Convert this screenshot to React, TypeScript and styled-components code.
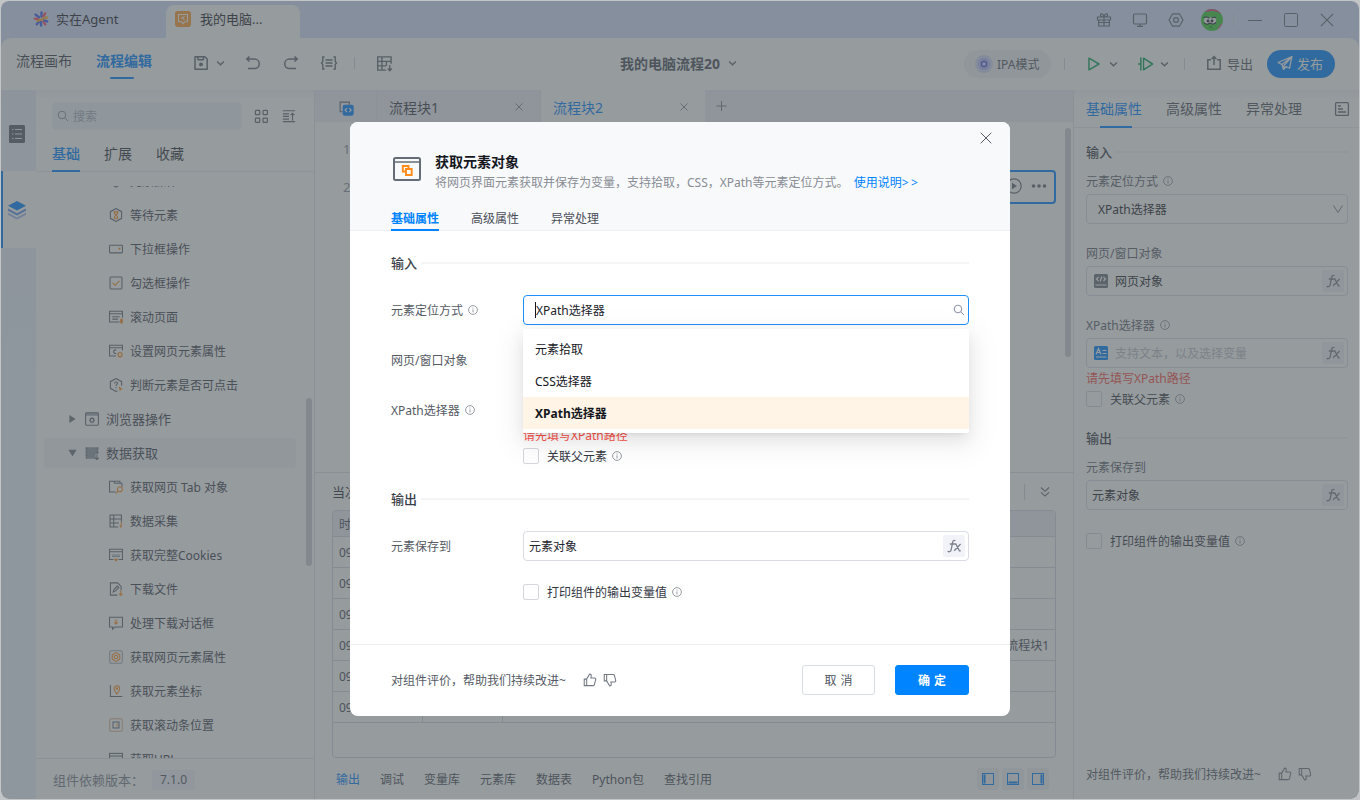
import React from 'react';
import styled, { createGlobalStyle, css } from 'styled-components';

const Global = createGlobalStyle`
  * { box-sizing: border-box; }
  body { margin: 0; background: #c3c4c5; overflow: hidden; }
  body, input, button { font-family: "Noto Sans", "Noto Sans CJK SC", sans-serif; font-size: 12px; color: #33363f; }
  svg { display: block; flex: none; }
`;

const BLUE = '#0084ff';
const ORANGE = '#ff8c1a';
const SLATE = '#646c76';

/* ---------- icons ---------- */

const Svg = ({ size = 16, color = SLATE, w = 1.2, box = 16, children }: {
  size?: number; color?: string; w?: number; box?: number; children: React.ReactNode;
}) => (
  <svg width={size} height={size} viewBox={`0 0 ${box} ${box}`} fill="none" stroke={color} strokeWidth={w}>
    {children}
  </svg>
);

const Chevron = ({ color = SLATE }: { color?: string }) => (
  <Svg size={9} box={8} color={color} w={1.2}><path d="M1 2.2 4 5.2 7 2.2" /></Svg>
);
const Cross = ({ size = 10, color = '#6b7078', w = 1 }: { size?: number; color?: string; w?: number }) => (
  <Svg size={size} box={10} color={color} w={w}><path d="M.6.6l8.8 8.8M9.4.6.6 9.4" /></Svg>
);
const Info = () => (
  <Svg size={10} box={10} color="#8b9099" w={0.9}>
    <circle cx="5" cy="5" r="4.4" />
    <path d="M5 4.4v3M5 2.5v1" />
  </Svg>
);
const ThumbUp = () => (
  <Svg size={14} color="#737983" w={1.2}>
    <path d="M1.4 7h2.8v7.4H1.4zM4.2 7 7.6 1.2c1.5 0 2 1 1.8 2.2L9 5.8h4.4c.9 0 1.3.7 1.1 1.5l-1.4 6c-.2.7-.7 1.1-1.4 1.1H4.2" />
  </Svg>
);
const ThumbDown = () => (
  <Svg size={14} color="#737983" w={1.2}>
    <path d="M1.4 9h2.8V1.6H1.4zM4.2 9l3.4 5.8c1.5 0 2-1 1.8-2.2L9 10.2h4.4c.9 0 1.3-.7 1.1-1.5l-1.4-6c-.2-.7-.7-1.1-1.4-1.1H4.2" />
  </Svg>
);
const Magnifier = ({ size = 12, color = '#8890a8' }: { size?: number; color?: string }) => (
  <Svg size={size} box={12} color={color} w={1}>
    <circle cx="5" cy="5" r="3.8" />
    <path d="M7.8 7.8 11 11" />
  </Svg>
);

const treeIcons: Record<string, React.ReactNode> = {
  hex: <path d="M8 1l6 3.5v7L8 15l-6-3.5v-7z" />,
  wait: <><path d="M8 .6l6.400 3.600v7.600L8 15.400l-6.400-3.600V4.200z" /><path stroke={ORANGE} d="M5.300 4.400h5.400M5.300 11.600h5.400M6.300 4.400v2L8 8l1.700-1.600v-2M6.300 11.600v-2L8 8l1.700 1.600v2" /></>,
  select: <><rect x=".6" y="3.800" width="14.800" height="8.600" rx="1" /><path stroke="none" fill={ORANGE} d="M10 6.600h4L12 9.200z" /></>,
  check: <><rect x="1.200" y="1.200" width="13.600" height="13.600" rx="1" /><path stroke={ORANGE} d="M4.200 7.800l2.800 2.800 5-5" /></>,
  scroll: <><path d="M12 13.800H.6V1.400h14.800v7.400M.6 4.200h14.800M3.800 7.600h8.400M3.800 10.400h6.400" /><rect x="12.800" y="9.800" width="3" height="5.800" rx="1.500" stroke="none" fill={ORANGE} /></>,
  setattr: <><path d="M8 13.800H.6V1.400h14.800v6M.6 4.200h14.800M8.400 7.200a2 2 0 1 0 0 3.200" /><circle cx="12.600" cy="12.200" r="2.200" stroke={ORANGE} /><path stroke={ORANGE} d="M12.600 8.800v1M12.600 14.600v1.200M9.200 12.200h1M15 12.200h1M10.200 9.800l.7.7M14.300 13.900l.7.7M15 9.800l-.7.7M10.900 13.900l-.7.7" /></>,
  judge: <><path d="M9.600 14.600 8 15.400l-6.400-3.600V4.200L8 .6l6.400 3.600v4.600M6.300 6.200c.2-2.400 3.600-2.200 3.400 0C9.600 7.400 8 7.400 8 9M8 10.400v1.200" /><path stroke="none" fill={ORANGE} d="M11 9.400l4.800 3.400-2.200.3-1.100 2.300z" /></>,
  browser: <><path stroke="none" fill="#aab0b9" d="M1 1h14v3.400H1z" /><rect x=".7" y=".9" width="14.600" height="14.200" rx="1" /><circle cx="8" cy="9.400" r="2.100" /><path d="M8 6v1.200M8 11.600v1.200M4.600 9.400h1.200M10.200 9.400h1.200M5.600 7l.8.8M9.600 11l.8.8M10.400 7l-.8.8M6.400 11l-.8.8" /></>,
  data: <><path stroke="none" fill="#949ba5" d="M1 1.500h14v8h-3v5H1z" /><path strokeDasharray="2.600 1.200" d="M1.400 1.800v12.400M14.600 1.800v7.600" /><path d="M13.600 10v5.600M11.400 13.400l2.200 2.200 2.200-2.200" /></>,
  tab: <><path d="M7.500 13.700H.6V1.400h4.900l1 2.400h8.300v4M6 1.400h6.500v2.200" /><circle cx="12.400" cy="10.600" r="2.800" stroke={ORANGE} /><path stroke={ORANGE} d="M10.400 12.600l-2.600 2.800" /></>,
  collect: <><path d="M10.500 14.800H1.200V1.200h13v8M1.200 5.600h13M1.200 10.200h10M5.400 1.200v13.600" /><path stroke={ORANGE} d="M14 9.400v5.800M12.200 13.400l1.800 1.800" /></>,
  cookie: <><path d="M5 13.200H.6V1.400h14.800v11.800H11M.6 4.200h14.800" /><path stroke="#98a0aa" d="M3 8h10M3.500 9.600h9" /><path stroke="none" fill={ORANGE} d="M5.400 12.400h5.200L8 15.800z" /></>,
  download: <><path d="M9.500 15H1.600V1h8.200l4 4v4.400M4.800 11.400l1-3 3.700-3.800L11.200 6.200 7.500 10.200z" /><path stroke={ORANGE} d="M13.400 9.800v5.400M11.400 13.200l2 2 2-2" /></>,
  dialog: <><path d="M.6 1.400h14.800v11.200H6.600l-2.600 2.400v-2.400H.6z" /><path stroke={ORANGE} d="M8 3.800v5.200M6 7.200l2 2 2-2" /></>,
  attr: <><rect x=".8" y=".8" width="14.400" height="14.400" rx="2" stroke="#a3a9b2" /><path stroke={ORANGE} d="M8 3l4.300 2.500v5L8 13l-4.300-2.500v-5z" /><circle cx="8" cy="8" r="2" stroke={ORANGE} /></>,
  coord: <><path d="M1.600 1.200v13h13.600" /><path stroke={ORANGE} d="M9 11.400C6.400 8.600 5.800 7.300 5.800 5.200a3.200 3.200 0 0 1 6.400 0c0 2.100-.6 3.400-3.200 6.200z" /><circle cx="9" cy="5.200" r=".8" stroke={ORANGE} /></>,
  scrollpos: <><rect x=".8" y=".8" width="14.400" height="14.400" rx="2" stroke="#ddb490" /><rect x="4.600" y="4.600" width="6.800" height="6.800" /><path stroke={ORANGE} d="M9.200 6.600v2.800" /></>,
  url: <><rect x=".6" y="1.600" width="14.800" height="12.400" /><path d="M.6 4.600h14.800" /></>,
};

const Glyph = ({ name }: { name: string }) => <Svg size={14} w={1.2}>{treeIcons[name]}</Svg>;

/* ---------- shell ---------- */

const Window = styled.div`
  position: relative;
  width: 1358px;
  height: 798px;
  margin: 1px;
  border-radius: 8px;
  overflow: hidden;
  display: flex;
  flex-direction: column;
  background: #d7e1ff;
`;
const Row = styled.div<{ $gap?: number }>`
  display: flex;
  align-items: center;
  gap: ${p => p.$gap || 0}px;
`;
const TitleBar = styled.header`
  height: 37px;
  flex: none;
  display: flex;
  align-items: stretch;
  padding-right: 13px;
`;
const HomeTab = styled.div`
  width: 165px;
  padding: 0 0 2px 32px;
  display: flex;
  align-items: center;
  gap: 7px;
  font-size: 13px;
  color: #22242b;
`;
const FileTab = styled.div`
  width: 134px;
  margin-top: 4px;
  padding: 0 0 6px 9px;
  display: flex;
  align-items: center;
  gap: 9px;
  border-radius: 8px 8px 0 0;
  background: #fff;
  font-size: 13px;
  color: #22242b;
`;
const FileBadge = styled.div`
  width: 16px;
  height: 16px;
  border-radius: 3px;
  background: #ff9d33;
  display: grid;
  place-items: center;
`;
const WindowTools = styled.div`
  margin-left: auto;
  display: flex;
  align-items: center;
`;
const Cell = styled.div<{ $w: number }>`
  width: ${p => p.$w}px;
  flex: none;
  display: flex;
  justify-content: center;
  align-items: center;
`;
const VLine = styled.i<{ $h?: number }>`
  flex: none;
  width: 1px;
  height: ${p => p.$h || 12}px;
  background: #d3d7de;
`;

const Toolbar = styled.div`
  height: 52px;
  flex: none;
  display: grid;
  grid-template-columns: 619px 1fr auto;
  align-items: center;
  padding: 0 24px 0 0;
  border-radius: 10px 10px 0 0;
  background: #fff;
`;
const ModeLink = styled.div<{ $on?: boolean }>`
  height: 36px;
  line-height: 30px;
  width: 56px;
  font-size: 14px;
  color: ${p => (p.$on ? BLUE : '#3c4049')};
  font-weight: ${p => (p.$on ? 700 : 400)};
  ${p => p.$on && css`
    &::after { content: ''; display: block; width: 24px; height: 2px; margin: 1px 0 0 14px; border-radius: 1px; background: ${BLUE}; }
  `}
`;
const FlowName = styled.div`
  display: flex;
  align-items: center;
  gap: 8px;
  padding-bottom: 2px;
  font-size: 14px;
  font-weight: 700;
  color: #4c525e;
`;
const ModePill = styled.div`
  width: 87px;
  height: 28px;
  margin-right: 13px;
  border-radius: 14px;
  background: #f2f3f8;
  display: flex;
  align-items: center;
  padding-left: 11px;
  gap: 4px;
  font-size: 12px;
  color: #535863;
`;
const ExportButton = styled.div`
  display: flex;
  align-items: center;
  gap: 5px;
  margin: 0 14px 0 21px;
  padding-bottom: 2px;
  font-size: 13px;
  color: #50555f;
`;
const PublishButton = styled.div`
  width: 68px;
  height: 28px;
  border-radius: 14px;
  background: ${BLUE};
  color: #fff;
  display: flex;
  align-items: center;
  padding: 0 0 2px 10px;
  gap: 4px;
  font-size: 13px;
`;
const Main = styled.div`
  flex: 1;
  min-height: 0;
  display: grid;
  grid-template-columns: 35px 279px 759px 1fr;
  background: #fff;
`;

/* ---------- left ---------- */

const Rail = styled.nav`
  background: linear-gradient(#ebeefa, #ebf3fe 40%);
  display: flex;
  flex-direction: column;
`;
const RailItem = styled.div<{ $on?: boolean }>`
  height: ${p => (p.$on ? 77 : 81)}px;
  padding: ${p => (p.$on ? '0 5px 0 0' : '7px 5px 0 0')};
  display: grid;
  place-items: center;
  background: ${p => (p.$on ? '#fff' : 'transparent')};
  border-left: 2px solid ${p => (p.$on ? BLUE : 'transparent')};
`;
const Side = styled.aside`
  display: flex;
  flex-direction: column;
  min-height: 0;
  border-right: 1px solid #e3e6ec;
  background: linear-gradient(#f4f5fb, #fff 10px);
`;
const SearchRow = styled.div`
  display: flex;
  align-items: center;
  padding: 12px 0 0 16px;
`;
const SearchBox = styled.div`
  width: 190px;
  height: 28px;
  border-radius: 4px;
  background: #edf3f9;
  display: flex;
  align-items: center;
  gap: 4px;
  padding-left: 5px;
  color: #a9aebb;
`;
const SideTabs = styled.div`
  display: flex;
  gap: 24px;
  height: 42px;
  padding-left: 16px;
  border-bottom: 1px solid #e8eaef;
`;
const SideTab = styled.div<{ $on?: boolean }>`
  height: 42px;
  line-height: 48px;
  font-size: 14px;
  font-weight: ${p => (p.$on ? 500 : 400)};
  color: ${p => (p.$on ? BLUE : '#30343d')};
  border-bottom: 2px solid ${p => (p.$on ? BLUE : 'transparent')};
`;
const TreeArea = styled.div`
  display: flex;
  height: 572px;
  margin-top: 14px;
  overflow: hidden;
`;
const Tree = styled.div`
  width: 270px;
  margin-top: -22px;
  padding-left: 8px;
`;
const TreeRow = styled.div<{ $group?: boolean; $on?: boolean }>`
  width: 252px;
  height: 30px;
  margin: 2px 0 4px;
  padding-left: ${p => (p.$group ? 24 : 65)}px;
  display: flex;
  align-items: center;
  gap: 7px;
  border-radius: 4px;
  background: ${p => (p.$on ? '#f4f5f9' : 'transparent')};
  font-size: ${p => (p.$group ? 13 : 12)}px;
  color: #3f4450;
  white-space: nowrap;
  span { margin-bottom: ${p => (p.$group ? 2 : 0)}px; }
`;
const Caret = styled.i<{ $open?: boolean }>`
  width: 9px;
  height: 8px;
  margin-right: 1px;
  background: #737a85;
  clip-path: ${p => (p.$open ? 'polygon(5% 10%, 95% 10%, 50% 95%)' : 'polygon(15% 0, 85% 50%, 15% 100%)')};
`;
const Thumb = styled.i<{ $h: number; $top: number }>`
  width: 6px;
  height: ${p => p.$h}px;
  margin-top: ${p => p.$top}px;
  border-radius: 3px;
  background: #cdd0d4;
`;
const Version = styled.div`
  flex: 1;
  display: flex;
  align-items: center;
  gap: 8px;
  padding: 0 0 0 17px;
  border-top: 1px solid #e3e6ec;
  font-size: 13px;
  color: #7c828c;
`;
const VersionTag = styled.span`
  width: 43px;
  height: 20px;
  line-height: 20px;
  border-radius: 3px;
  background: #f2f4fa;
  text-align: center;
  font-size: 12px;
  color: #565c67;
`;

/* ---------- center ---------- */

const Center = styled.section`
  display: flex;
  flex-direction: column;
  border-right: 1px solid #e3e6ec;
`;
const BlockTabs = styled.div`
  height: 32px;
  display: flex;
  background: linear-gradient(#eeeef9, #f1f1fa);
`;
const BlockTab = styled.div<{ $w: number; $on?: boolean }>`
  width: ${p => p.$w}px;
  display: flex;
  align-items: center;
  justify-content: space-between;
  padding: 2px 17px 0 12px;
  border-left: 1px solid #e6e8f1;
  background: ${p => (p.$on ? '#fff' : 'transparent')};
  font-size: 14px;
  color: ${p => (p.$on ? BLUE : '#3c4049')};
`;
const BlockIcon = styled.div`
  width: 61px;
  padding: 11px 0 0 24px;
`;
const Editor = styled.div`
  height: 350px;
  display: flex;
  justify-content: space-between;
  padding-right: 2px;
`;
const Lines = styled.div`
  width: 741px;
  padding-top: 10px;
`;
const Line = styled.div`
  display: flex;
  align-items: center;
  height: 34px;
  margin-bottom: 4px;
  padding-left: 28px;
  font-size: 13px;
  color: #8d929b;
`;
const Step = styled.div`
  flex: 1;
  height: 34px;
  margin-left: 14px;
  border: 2px solid ${BLUE};
  border-radius: 4px;
  display: flex;
  align-items: center;
  justify-content: flex-end;
  gap: 9px;
  padding: 0 7px 2px 0;
`;
const Console = styled.div`
  border-top: 1px solid #dfe2e9;
  padding: 0 17px;
  flex: 1;
`;
const ConsoleHead = styled.div`
  display: flex;
  align-items: center;
  justify-content: space-between;
  height: 37px;
  padding-right: 5px;
  font-size: 13px;
  color: #30343d;
`;
const LogTable = styled.div`
  width: 724px;
  height: 248px;
  border: 1px solid #d2d7e2;
  border-radius: 4px;
  overflow: hidden;
`;
const LogRow = styled.div<{ $head?: boolean }>`
  display: grid;
  grid-template-columns: 90px 80px 1fr;
  height: ${p => (p.$head ? 26 : 31)}px;
  line-height: ${p => (p.$head ? 27 : 31)}px;
  border-bottom: 1px solid #d2d7e2;
  background: ${p => (p.$head ? '#edf0f8' : 'transparent')};
  color: #474c57;
`;
const LogCell = styled.span<{ $end?: boolean }>`
  padding: 0 6px;
  border-right: ${p => (p.$end ? 0 : 1)}px solid #d2d7e2;
  text-align: ${p => (p.$end ? 'right' : 'left')};
`;
const ConsoleTabs = styled.div`
  display: flex;
  align-items: center;
  gap: 20px;
  height: 42px;
  padding: 0 7px 0 4px;
  color: #484d58;
`;
const ConsoleTab = styled.span<{ $on?: boolean }>`
  color: ${p => (p.$on ? BLUE : '#484d58')};
`;
const LayoutButton = styled.div`
  width: 22px;
  height: 22px;
  border-radius: 3px;
  background: #f1f2f6;
  display: grid;
  place-items: center;
`;

/* ---------- right ---------- */

const Props = styled.aside`
  display: flex;
  flex-direction: column;
  background: linear-gradient(#f4f5fb, #fff 10px);
`;
const PropTabs = styled.div`
  height: 38px;
  display: flex;
  gap: 24px;
  padding: 0 9px 0 12px;
  border-bottom: 1px solid #e8eaef;
  align-items: flex-start;
`;
const PropTab = styled.div<{ $on?: boolean }>`
  height: 38px;
  line-height: 37px;
  font-size: 14px;
  color: ${p => (p.$on ? BLUE : '#50555f')};
  ${p => p.$on && css`
    &::after { content: ''; display: block; width: 32px; height: 2px; margin: -1px 0 0 14px; background: ${BLUE}; }
  `}
`;
const PropBody = styled.div`
  flex: 1;
  padding: 14px 11px 0 12px;
`;
const SectionTitle = styled.div<{ $mt?: number }>`
  display: flex;
  align-items: center;
  gap: 4px;
  height: 20px;
  margin-top: ${p => p.$mt || 0}px;
  padding-bottom: 2px;
  font-size: 13px;
  font-weight: 500;
  color: #3a3e48;
  &::after { content: ''; flex: 1; height: 2px; margin-top: 2px; background: #f4f5f6; }
`;
const FieldLabel = styled.div<{ $mt: number }>`
  display: flex;
  align-items: center;
  gap: 5px;
  height: 18px;
  margin: ${p => p.$mt}px 0 4px;
  color: #60656f;
`;
const Input = styled.div<{ $focus?: boolean; $pad?: number; $muted?: boolean }>`
  height: 30px;
  display: flex;
  align-items: center;
  padding: 0 3px 0 ${p => p.$pad ?? 5}px;
  border: 1px solid ${p => (p.$focus ? '#1e8ef8' : '#d9dbe6')};
  border-radius: 4px;
  color: ${p => (p.$muted ? '#bcc0c8' : '#22242b')};
  > :last-child { margin-left: auto; }
`;
const Fx = styled.span`
  width: 22px;
  height: 22px;
  border-radius: 2px;
  background: #f1f3f8;
  display: grid;
  place-items: center;
`;
const FxIcon = () => (
  <Fx><Svg size={16} color="#7b808b" w={1.3}>
    <path d="M9.400 2.800C8 1.800 7 2.600 6.700 4.200L5.200 11.600C4.900 13.400 3.200 14.300 1.600 13.300M3.800 6h4.800M8.600 6h1.200l3.600 6.800h1.400M14.600 6 8.200 12.800" />
  </Svg></Fx>
);
const Warning = styled.div`
  height: 20px;
  line-height: 22px;
  color: #fb5147;
`;
const CheckRow = styled.div<{ $mt?: number }>`
  display: flex;
  align-items: center;
  height: 16px;
  margin-top: ${p => p.$mt || 0}px;
  color: #33363f;
  gap: 5px;
`;
const Box = styled.i`
  width: 16px;
  height: 16px;
  margin-right: 3px;
  border: 1px solid #d5d7dd;
  border-radius: 2px;
  background: #fff;
`;
const Rate = styled.div`
  display: flex;
  align-items: center;
  height: 20px;
  gap: 6px;
  color: #555a64;
  span { margin-right: 11px; }
`;

/* ---------- dialog ---------- */

const Mask = styled.div`
  position: absolute;
  inset: 0;
  background: rgba(80, 88, 93, 0.6);
`;
const Dialog = styled.div`
  position: absolute;
  left: 349px;
  top: 121px;
  width: 660px;
  height: 594px;
  border-radius: 8px;
  background: #fff;
  overflow: hidden;
  display: flex;
  flex-direction: column;
`;
const DialogHead = styled.div`
  height: 109px;
  background: #f8f9fb;
  border-bottom: 1px solid #eeeff2;
  padding: 0 18px 0 41px;
`;
const CloseRow = styled.div`
  height: 30px;
  display: flex;
  justify-content: flex-end;
  padding-top: 10px;
`;
const Heading = styled.div`
  display: flex;
  gap: 14px;
  padding: 0 0 0 1px;
`;
const HeadText = styled.div`
  white-space: nowrap;
  h1 { margin: 0; font-size: 14px; line-height: 20px; font-weight: 700; color: #15171e; }
  p { margin: 0; line-height: 21px; color: #888c94; }
  a { color: ${BLUE}; margin-left: 2px; }
  b { font-weight: 400; letter-spacing: 2.4px; }
`;
const DialogTabs = styled.div`
  display: flex;
  gap: 32px;
  margin-top: 12px;
`;
const DialogTab = styled.div<{ $on?: boolean }>`
  height: 26px;
  line-height: 27px;
  color: ${p => (p.$on ? BLUE : '#4a4e58')};
  font-weight: ${p => (p.$on ? 700 : 400)};
  border-bottom: 2px solid ${p => (p.$on ? BLUE : 'transparent')};
`;
const DialogBody = styled.div`
  height: 413px;
  padding: 22px 41px 0 41px;
`;
const FormRow = styled.div<{ $mt: number }>`
  position: relative;
  display: grid;
  grid-template-columns: 132px 446px;
  min-height: 30px;
  margin-top: ${p => p.$mt}px;
`;
const RowLabel = styled.div`
  display: flex;
  align-items: center;
  gap: 5px;
  height: 30px;
  color: #555a64;
`;
const Cursor = styled.i`
  width: 1px;
  height: 16px;
  background: #15171e;
`;
const Menu = styled.div`
  position: absolute;
  z-index: 2;
  left: 132px;
  top: 34px;
  width: 446px;
  height: 104px;
  padding: 4px 0;
  background: #fff;
  border-radius: 2px;
  box-shadow: 0 3px 6px -4px rgba(0,0,0,.12), 0 6px 16px rgba(0,0,0,.08), 0 9px 28px 8px rgba(0,0,0,.05);
`;
const Option = styled.div<{ $on?: boolean }>`
  height: 32px;
  line-height: 34px;
  padding-left: 12px;
  color: #15171e;
  font-weight: ${p => (p.$on ? 700 : 400)};
  background: ${p => (p.$on ? '#fff4e6' : 'transparent')};
`;
const DialogFoot = styled.div`
  flex: 1;
  display: flex;
  align-items: center;
  justify-content: space-between;
  padding: 0 41px 2px;
  border-top: 1px solid #eeeff2;
`;
const Button = styled.button<{ $primary?: boolean }>`
  width: ${p => (p.$primary ? 74 : 73)}px;
  height: 30px;
  padding: 0;
  border-radius: 3px;
  border: 1px solid ${p => (p.$primary ? BLUE : '#d7dde5')};
  background: ${p => (p.$primary ? BLUE : '#fff')};
  color: ${p => (p.$primary ? '#fff' : '#50555f')};
  font-weight: ${p => (p.$primary ? 700 : 400)};
  font-size: 12px;
  word-spacing: 1px;
`;

const tree: { icon: string; label: string; group?: boolean; open?: boolean }[] = [
  { icon: 'hex', label: '元素操作' },
  { icon: 'wait', label: '等待元素' },
  { icon: 'select', label: '下拉框操作' },
  { icon: 'check', label: '勾选框操作' },
  { icon: 'scroll', label: '滚动页面' },
  { icon: 'setattr', label: '设置网页元素属性' },
  { icon: 'judge', label: '判断元素是否可点击' },
  { icon: 'browser', label: '浏览器操作', group: true },
  { icon: 'data', label: '数据获取', group: true, open: true },
  { icon: 'tab', label: '获取网页 Tab 对象' },
  { icon: 'collect', label: '数据采集' },
  { icon: 'cookie', label: '获取完整Cookies' },
  { icon: 'download', label: '下载文件' },
  { icon: 'dialog', label: '处理下载对话框' },
  { icon: 'attr', label: '获取网页元素属性' },
  { icon: 'coord', label: '获取元素坐标' },
  { icon: 'scrollpos', label: '获取滚动条位置' },
  { icon: 'url', label: '获取URL' },
];

const RateLine = () => (
  <Rate><span>对组件评价，帮助我们持续改进~</span><ThumbUp /><ThumbDown /></Rate>
);

const Title = () => (
  <TitleBar>
    <HomeTab>
      <Svg size={16} w={2.4}>
        <path stroke="#3b62f0" d="M8.500 1.500v4M2.600 3.600l3.400 2.600M8 14.600v-4M3.800 13.200l2.400-3" strokeLinecap="round" />
        <path stroke="#ff4f6d" d="M12.200 2.400 10.400 5.400M1.800 7.600l3.600.6M10.400 10.600l1.800 2.800" strokeLinecap="round" />
        <path stroke="#ffb02e" d="M4.600 10 14 6.400" strokeLinecap="round" />
        <path stroke="#3b62f0" d="M11.400 9.600l2.800.8" strokeLinecap="round" />
      </Svg>
      实在Agent
    </HomeTab>
    <FileTab>
      <FileBadge>
        <Svg size={12} box={12} color="#fff" w={1.1}>
          <path d="M1.500 1.500h9v7.200H7.800L6 10.600 4.200 8.700H1.500z" />
          <path d="M7.600 3.400 4.800 5.100l2.800 1.700" />
        </Svg>
      </FileBadge>
      我的电脑...
    </FileTab>
    <WindowTools>
      <Cell $w={36}><Svg size={16}><path d="M1.500 5h13v3h-13zM2.700 8v6h10.600V8M8 5v9M8 5C5 5 4 3.800 4.500 2.500 5.300 1 7.600 1.800 8 5c.4-3.200 2.700-4 3.500-2.500C12 3.800 11 5 8 5M2.700 10.500h10.600" /></Svg></Cell>
      <Cell $w={36}><Svg size={16}><rect x="1.500" y="2" width="13" height="10" rx="1.200" /><path d="M5 14.300h6M8 12v2" /></Svg></Cell>
      <Cell $w={36}><Svg size={16}><path d="M4.600 1.800h6.800L15 8l-3.600 6.200H4.600L1 8z" strokeLinejoin="round" /><circle cx="8" cy="8" r="2.400" /></Svg></Cell>
      <Cell $w={36}>
        <svg width="22" height="22" viewBox="0 0 22 22">
          <circle cx="11" cy="11" r="11" fill="#3ecb3c" />
          <path d="M4 2.500A11 11 0 0 1 20 5L16.500 3 11 1.800 6 3z" fill="#e5428a" />
          <path d="M21.500 14a11 11 0 0 1-5 6.500l1.500-3.500z" fill="#e0649b" />
          <circle cx="6.500" cy="11.500" r="3.600" fill="#f4f6f4" />
          <circle cx="11.500" cy="11.500" r="3.600" fill="#f4f6f4" />
          <circle cx="7" cy="12" r="1.400" fill="#223" /><circle cx="11" cy="12" r="1.400" fill="#223" />
          <path d="M2.500 8.500c2-1 4-.6 6 .8M15 8.500c-1.600-.6-3-.4-4.500.8M3 13.500c1.500 2.200 4 2.300 6 .5 2 1.600 4.500 1.300 6-.8" stroke="#223" strokeWidth="1.100" fill="none" />
          <path d="M8 19l2-2 1.500 2.500" stroke="#1d8a2a" fill="none" />
        </svg>
      </Cell>
      <Cell $w={6}><VLine $h={14} /></Cell>
      <Cell $w={38}><Svg size={14} box={14} w={1}><path d="M0 7.500h14" /></Svg></Cell>
      <Cell $w={34}><Svg size={14} box={14} w={1}><rect x=".5" y=".5" width="13" height="13" rx="1" /></Svg></Cell>
      <Cell $w={38}><Cross size={14} color={SLATE} w={0.8} /></Cell>
    </WindowTools>
  </TitleBar>
);

const NavRow = styled(Row)`
  padding-left: 15px;
`;
const Tools = styled(Row)`
  margin-left: 33px;
  margin-top: -2px;
`;

const Bar = () => (
  <Toolbar>
    <NavRow>
      <Row $gap={24}><ModeLink>流程画布</ModeLink><ModeLink $on>流程编辑</ModeLink></Row>
      <Tools>
        <Cell $w={32}><Svg size={16} w={1.500}><path d="M2 1.800h9.800L14.200 4v10.200H2zM5 1.800v3h5.400v-3" strokeLinejoin="round" /><circle cx="8" cy="9.400" r="1.200" fill={SLATE} /></Svg></Cell>
        <Cell $w={6}><Chevron /></Cell>
        <Cell $w={60}><Svg size={16} w={1.500}><path d="M4.500 1.500 1.800 4l2.700 2.500M2 4h7.500a4.800 4.800 0 0 1 0 9.600H3" /></Svg></Cell>
        <Cell $w={16}><Svg size={16} w={1.500}><path d="M11.500 1.500 14.200 4l-2.700 2.500M14 4H6.500a4.800 4.800 0 0 0 0 9.600H13" /></Svg></Cell>
        <Cell $w={5} />
        <Cell $w={50}><Svg size={18} box={18} w={1.400}><path d="M4.500 3H2.800v4.500L1.500 9l1.300 1.500V15h1.700M13.500 3h1.700v4.500L16.500 9l-1.300 1.500V15h-1.700M5.500 6h7M5.500 9h7M5.500 12h7" /></Svg></Cell>
        <VLine />
        <Cell $w={59}><Svg size={17} w={1.300}><path d="M9.500 14.200H1.600V1.800h12.600v6.500M1.600 6h12.600M1.600 10.200h8M5.600 1.800v12.400M9.800 6v4M13 9.500v5.300M11 12.800l2 2 2-2" /></Svg></Cell>
      </Tools>
    </NavRow>
    <FlowName>我的电脑流程20 <Chevron /></FlowName>
    <Row>
      <ModePill>
        <Svg size={18} color="#5b68e8" w={1.800}><circle cx="8" cy="8" r="7" fill="#dfe3fb" stroke="#cfd4f8" /><circle cx="8" cy="8" r="4.800" stroke="#9aa4f2" strokeWidth="1" /><circle cx="8" cy="8" r="2.400" /></Svg>
        IPA模式
      </ModePill>
      <VLine />
      <Cell $w={21} />
      <Cell $w={16}><Svg size={16} color="#10a35c" w={1.500}><path d="M3 2.200 13 8 3 13.800z" strokeLinejoin="round" /></Svg></Cell>
      <Cell $w={24}><Chevron /></Cell>
      <Cell $w={11} />
      <Cell $w={18}><Svg size={16} color="#10a35c" w={1.500}><path d="M5.500 2.200 14.500 8l-9 5.800zM2.800 1.500v13M0 8h2.500" strokeLinejoin="round" /></Svg></Cell>
      <Cell $w={20}><Chevron /></Cell>
      <Cell $w={9} />
      <VLine />
      <ExportButton>
        <Svg size={16} w={1.500}><path d="M5 4.800H1.800v9.400h12.400V4.800H11M8 10V1.800M5.600 4 8 1.600 10.400 4" /></Svg>导出
      </ExportButton>
      <PublishButton>
        <Svg size={16} color="#fff" w={1.200}><path d="M15 1.500 1 7.500l4 2L6.500 14.500 9 11.500l3.500 1.700zM15 1.500 5 9.500M15 1.500 7 10.500l-.5 4" strokeLinejoin="round" /></Svg>发布
      </PublishButton>
    </Row>
  </Toolbar>
);

const SideIcon = styled.div<{ $ml: number }>`
  margin-left: ${p => p.$ml}px;
`;

const Left = () => (
  <Side>
    <SearchRow>
      <SearchBox><Magnifier color="#8d939e" />搜索</SearchBox>
      <SideIcon $ml={12}><Svg size={15} w={1.300}><rect x="1.500" y="1.500" width="4.600" height="4.600" rx=".8" /><rect x="9.700" y="1.500" width="4.600" height="4.600" rx=".8" /><rect x="1.500" y="9.700" width="4.600" height="4.600" rx=".8" /><rect x="9.700" y="9.700" width="4.600" height="4.600" rx=".8" /></Svg></SideIcon>
      <SideIcon $ml={13}><Svg size={14} w={1.300}><path d="M1 2h14M1 5.500h7M1 8.500h7M1 11.500h7M1 14.500h14M12 13V5M9.800 7 12 4.800 14.200 7" /></Svg></SideIcon>
    </SearchRow>
    <SideTabs><SideTab $on>基础</SideTab><SideTab>扩展</SideTab><SideTab>收藏</SideTab></SideTabs>
    <TreeArea>
      <Tree>
        {tree.map(t => (
          <TreeRow key={t.label} $group={t.group} $on={t.open}>
            {t.group && <Caret $open={t.open} />}
            <Glyph name={t.icon} />
            <span>{t.label}</span>
          </TreeRow>
        ))}
      </Tree>
      <Thumb $h={168} $top={212} />
    </TreeArea>
    <Version>组件依赖版本： <VersionTag>7.1.0</VersionTag></Version>
  </Side>
);

const PushRight = styled(Row)`
  margin-left: auto;
`;

const Middle = () => (
  <Center>
    <BlockTabs>
      <BlockIcon>
        <Svg size={15}><path d="M4 11.500H1.200V1.200H11V4" /><rect x="4.500" y="4.500" width="10.500" height="10.500" rx="1.500" fill={BLUE} stroke={BLUE} /><path stroke="#fff" d="M8.500 7.500l-2 2.200 2 2.200M11 7.500l2 2.200-2 2.200" /></Svg>
      </BlockIcon>
      <BlockTab $w={164}>流程块1 <Cross size={8} /></BlockTab>
      <BlockTab $w={165} $on>流程块2 <Cross size={8} /></BlockTab>
      <Cell $w={32}><Svg size={12} box={12} color="#7a7f89" w={1}><path d="M6.500 1v10M1.500 6h10" /></Svg></Cell>
    </BlockTabs>
    <Editor>
      <Lines>
        <Line>1</Line>
        <Line>2<Step>
          <Svg size={16} w={1.200}><circle cx="8" cy="8" r="7.200" /><path d="M6 4.800v6.400L11 8z" fill={SLATE} stroke="none" /></Svg>
          <svg width="16" height="4" viewBox="0 0 16 4" fill={SLATE}><circle cx="2.500" cy="2" r="1.800" /><circle cx="8" cy="2" r="1.800" /><circle cx="13.500" cy="2" r="1.800" /></svg>
        </Step></Line>
      </Lines>
      <Thumb $h={229} $top={6} />
    </Editor>
    <Console>
      <ConsoleHead>
        当次
        <Row $gap={14}><VLine $h={16} /><Svg size={12} box={12} w={1.100}><path d="M2 1.500l4 3.800 4-3.800M2 6.300l4 3.800 4-3.800" /></Svg></Row>
      </ConsoleHead>
      <LogTable>
        <LogRow $head><LogCell>时间</LogCell></LogRow>
        {['', '', '', '流程块1', '', ''].map((t, i) => (
          <LogRow key={i}><LogCell>09:41</LogCell><LogCell /><LogCell $end>{t}</LogCell></LogRow>
        ))}
      </LogTable>
      <ConsoleTabs>
        <ConsoleTab $on>输出</ConsoleTab>
        {['调试', '变量库', '元素库', '数据表', 'Python包', '查找引用'].map(t => <ConsoleTab key={t}>{t}</ConsoleTab>)}
        <PushRight $gap={3}>
          <LayoutButton><Svg size={12} box={12} color={BLUE} w={1}><rect x=".5" y=".5" width="11" height="11" /><path d="M2.500 1.500v9" strokeWidth="2" /></Svg></LayoutButton>
          <LayoutButton><Svg size={12} box={12} color={BLUE} w={1}><rect x=".5" y=".5" width="11" height="11" /><path d="M1.500 9.500h9" strokeWidth="2" /></Svg></LayoutButton>
          <LayoutButton><Svg size={12} box={12} color={BLUE} w={1}><rect x=".5" y=".5" width="11" height="11" /><path d="M9.500 1.500v9" strokeWidth="2" /></Svg></LayoutButton>
        </PushRight>
      </ConsoleTabs>
    </Console>
  </Center>
);

const TypeIcon = styled.span`
  margin-right: 7px;
`;
const TabMenuIcon = styled.div`
  margin: 11px 0 0 auto;
`;
const RateDock = styled.div`
  padding: 0 0 16px 12px;
`;

const Right = () => (
  <Props>
    <PropTabs>
      <PropTab $on>基础属性</PropTab><PropTab>高级属性</PropTab><PropTab>异常处理</PropTab>
      <TabMenuIcon><Svg size={16} w={1.300}><rect x="1.600" y="1.600" width="12.800" height="12.800" rx="1" /><path d="M4 5h3M4 8h5M4 11h8" /></Svg></TabMenuIcon>
    </PropTabs>
    <PropBody>
      <SectionTitle>输入</SectionTitle>
      <FieldLabel $mt={10}>元素定位方式 <Info /></FieldLabel>
      <Input $pad={11}>XPath选择器 <Svg size={12} box={12} color="#7b8191" w={1}><path d="M1.500 2.500 6 9.500l4.500-7" /></Svg></Input>
      <FieldLabel $mt={20}>网页/窗口对象</FieldLabel>
      <Input $pad={7}>
        <TypeIcon><Svg size={14} box={14}><rect width="14" height="14" rx="1.500" fill="#6f7681" stroke="none" /><path stroke="#fff" d="M4.500 3 2.500 5l2 2M9.500 3l2 2-2 2M7.800 2.500l-1.600 5M1.500 11h11" /></Svg></TypeIcon>
        网页对象 <FxIcon />
      </Input>
      <FieldLabel $mt={20}>XPath选择器 <Info /></FieldLabel>
      <Input $pad={7} $muted>
        <TypeIcon><Svg size={14} box={14}><rect width="14" height="14" rx="1.500" fill={BLUE} stroke="none" /><path stroke="#fff" d="M2 8.500 4.500 2.500 7 8.500M3 6.500h3M8.500 4.500h4M8.500 7.500h4M2 11h10.500" /></Svg></TypeIcon>
        支持文本，以及选择变量 <FxIcon />
      </Input>
      <Warning>请先填写XPath路径</Warning>
      <CheckRow $mt={3}><Box />关联父元素 <Info /></CheckRow>
      <SectionTitle $mt={21}>输出</SectionTitle>
      <FieldLabel $mt={10}>元素保存到</FieldLabel>
      <Input>元素对象 <FxIcon /></Input>
      <CheckRow $mt={23}><Box />打印组件的输出变量值 <Info /></CheckRow>
    </PropBody>
    <RateDock><RateLine /></RateDock>
  </Props>
);

const Stack = styled.div`
  display: flex;
  flex-direction: column;
`;

const HeadIcon = styled.div`
  padding: 5px 0 0 1px;
`;

const ComponentDialog = () => (
  <Dialog>
    <DialogHead>
      <CloseRow><Cross size={12} color="#4d525b" w={0.8} /></CloseRow>
      <Heading>
        <HeadIcon>
          <svg width="28" height="24" viewBox="0 0 28 24" fill="none">
            <rect x="1" y="1" width="26" height="22" rx="1.500" stroke={SLATE} strokeWidth="2" />
            <path d="M1 5h26" stroke={SLATE} strokeWidth="1.600" />
            <path d="M13 14.500H9.800V9h5.700v3M13 12h5.700v6H13z" stroke={ORANGE} strokeWidth="1.900" />
          </svg>
        </HeadIcon>
        <HeadText>
          <h1>获取元素对象</h1>
          <p>将网页界面元素获取并保存为变量，支持拾取，CSS，XPath等元素定位方式。 <a>使用说明<b>&gt;&gt;</b></a></p>
        </HeadText>
      </Heading>
      <DialogTabs><DialogTab $on>基础属性</DialogTab><DialogTab>高级属性</DialogTab><DialogTab>异常处理</DialogTab></DialogTabs>
    </DialogHead>
    <DialogBody>
      <SectionTitle>输入</SectionTitle>
      <FormRow $mt={22}>
        <RowLabel>元素定位方式 <Info /></RowLabel>
        <Input $focus $pad={11}><Cursor />XPath选择器 <Magnifier size={12} /></Input>
        <Menu>
          <Option>元素拾取</Option>
          <Option>CSS选择器</Option>
          <Option $on>XPath选择器</Option>
        </Menu>
      </FormRow>
      <FormRow $mt={20}><RowLabel>网页/窗口对象</RowLabel><Input /></FormRow>
      <FormRow $mt={20}>
        <RowLabel>XPath选择器 <Info /></RowLabel>
        <Stack>
          <Input />
          <Warning>请先填写XPath路径</Warning>
          <CheckRow $mt={3}><Box />关联父元素 <Info /></CheckRow>
        </Stack>
      </FormRow>
      <SectionTitle $mt={25}>输出</SectionTitle>
      <FormRow $mt={22}>
        <RowLabel>元素保存到</RowLabel>
        <Stack>
          <Input>元素对象 <FxIcon /></Input>
          <CheckRow $mt={23}><Box />打印组件的输出变量值 <Info /></CheckRow>
        </Stack>
      </FormRow>
    </DialogBody>
    <DialogFoot>
      <RateLine />
      <Row $gap={20}><Button>取 消</Button><Button $primary>确 定</Button></Row>
    </DialogFoot>
  </Dialog>
);

export default function App() {
  return (
    <>
      <Global />
      <Window>
        <Title />
        <Bar />
        <Main>
          <Rail>
            <RailItem><Svg size={18} box={18}><rect x="1" y="0" width="16" height="18" rx="1.500" fill="#5c636e" stroke="none" /><path stroke="#eef1f6" d="M4 4.500h1.500M7 4.500h7M4 9h1.500M7 9h7M4 13.500h1.500M7 13.500h7" /></Svg></RailItem>
            <RailItem $on><Svg size={20} box={20}><path d="M10 1l9 4.800-9 4.800-9-4.800z" fill={BLUE} stroke="none" /><path d="M1 8.500l9 4.800 9-4.800v2.300l-9 4.800-9-4.800z" fill="#5f93ee" stroke="none" /><path d="M1 12.800l9 4.800 9-4.800v1.900l-9 4.800-9-4.800z" fill="#a0bbf3" stroke="none" /></Svg></RailItem>
          </Rail>
          <Left />
          <Middle />
          <Right />
        </Main>
        <Mask />
        <ComponentDialog />
      </Window>
    </>
  );
}
